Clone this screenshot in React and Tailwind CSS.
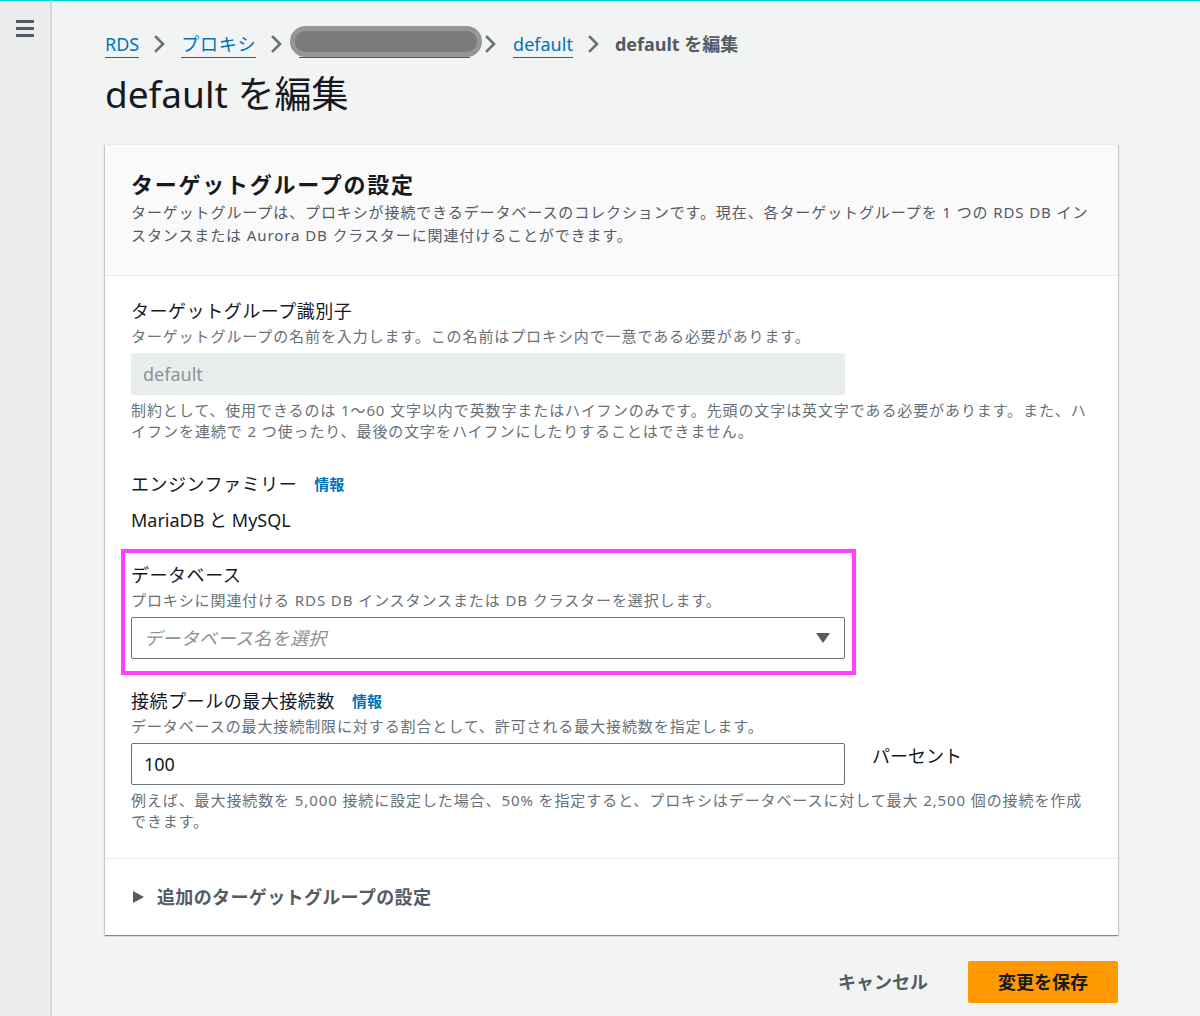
import React from 'react'

const font = { fontFamily: '"Noto Sans", "Noto Sans CJK JP", sans-serif' }

const Chevron = ({ className = 'mx-[15px]' }) => (
  <svg className={`${className} h-[20px] w-[12px] shrink-0`} viewBox="0 0 12 20" fill="none">
    <path d="M2 3l7 7-7 7" stroke="#687078" strokeWidth="2.6" strokeLinecap="square" />
  </svg>
)

const Field = ({ label, info, desc, children }) => (
  <div>
    <div className="flex items-center text-[18px] leading-[24px] tracking-[0.03em] text-[#16191f]">
      <span>{label}</span>
      {info && <span className="ml-[17px] text-[15px] font-bold tracking-normal text-[#0073bb]">情報</span>}
    </div>
    {desc && <p className="mt-[2px] text-[15px] leading-[22px] tracking-[0.06em] text-[#687078]">{desc}</p>}
    {children}
  </div>
)

export default function App() {
  return (
    <div className="flex min-h-[1016px] bg-[#f2f3f3]" style={font}>
      {/* sidebar */}
      <div className="w-[52px] shrink-0 border-t border-t-[#00d1d1] border-r-2 border-r-[#d8dada] bg-[#ebecec]">
        <div className="mt-[19px] ml-[16px] flex w-[18px] flex-col gap-[4px]">
          <div className="h-[3px] bg-[#545b64]" />
          <div className="h-[3px] bg-[#545b64]" />
          <div className="h-[3px] bg-[#545b64]" />
        </div>
      </div>

      <div className="flex-1 border-t border-t-[#00d1d1]">
        <div className="ml-[53px] w-[1013px]">
          {/* breadcrumb */}
          <div className="mt-[30px] flex h-[26px] items-center text-[18px] leading-[26px]">
            <a className="border-b border-[#0073bb] text-[#0073bb]">RDS</a>
            <Chevron />
            <a className="border-b border-[#0073bb] tracking-[0.04em] text-[#0073bb]">プロキシ</a>
            <Chevron />
            <span className="relative ml-[-8px] mr-[3px] h-[26px] w-[192px]">
              <span className="absolute left-[9px] right-[12px] bottom-[-1px] h-px bg-[#0073bb]" />
              <span className="absolute left-0 top-[-5px] h-[31px] w-[192px] rounded-full border-[5px] border-[#969696] bg-[#7b7b7b]" />
            </span>
            <Chevron className="mr-[16px]" />
            <a className="border-b border-[#0073bb] text-[#0073bb]">default</a>
            <Chevron />
            <span className="font-bold text-[#545b64]">default を編集</span>
          </div>

          {/* title */}
          <h1 className="mt-[14px] text-[37px] leading-[46px] text-[#16191f]">default を編集</h1>

          {/* card */}
          <div className="mt-[27px] border-t border-[#eaeded] bg-white shadow-[0_1px_1px_0_rgba(0,28,36,0.3),1px_1px_1px_0_rgba(0,28,36,0.15),-1px_1px_1px_0_rgba(0,28,36,0.15)]">
            <div className="border-b border-[#eaeded] bg-[#fafafa] px-[26px] pt-[25px] pb-[28px]">
              <h2 className="text-[22px] font-bold leading-[28px] tracking-[0.08em] text-[#16191f]">ターゲットグループの設定</h2>
              <p className="mt-[3px] text-[15px] leading-[23px] tracking-[0.06em] text-[#545b64]">
                ターゲットグループは、プロキシが接続できるデータベースのコレクションです。現在、各ターゲットグループを 1 つの RDS DB インスタンスまたは Aurora DB クラスターに関連付けることができます。
              </p>
            </div>

            <div className="flex flex-col gap-[30px] px-[26px] pt-[23px] pb-[26px]">
              <Field label="ターゲットグループ識別子" desc="ターゲットグループの名前を入力します。この名前はプロキシ内で一意である必要があります。">
                <div className="mt-[6px] flex h-[42px] w-[714px] items-center rounded-[2px] bg-[#eaeded] px-[12px] text-[18px] text-[#879596]">
                  default
                </div>
                <p className="mt-[5px] text-[15px] leading-[21px] tracking-[0.06em] text-[#687078]">
                  制約として、使用できるのは 1〜60 文字以内で英数字またはハイフンのみです。先頭の文字は英文字である必要があります。また、ハイフンを連続で 2 つ使ったり、最後の文字をハイフンにしたりすることはできません。
                </p>
              </Field>

              <div>
                <Field label="エンジンファミリー" info />
                <p className="mt-[12px] text-[18px] leading-[24px] text-[#16191f]">MariaDB と MySQL</p>
              </div>

              <div className="relative mt-[1px]">
                <div className="pointer-events-none absolute left-[-10px] top-[-14px] h-[126px] w-[735px] border-[4px] border-[#ff40ff]" />
                <Field label="データベース" desc="プロキシに関連付ける RDS DB インスタンスまたは DB クラスターを選択します。">
                  <div className="mt-[6px] flex h-[42px] w-[714px] items-center justify-between rounded-[2px] border border-[#687078] bg-white pl-[12px] pr-[14px]">
                    <span className="text-[18px] italic tracking-[0.02em] text-[#879596]">データベース名を選択</span>
                    <svg className="h-[10px] w-[14px]" viewBox="0 0 14 10">
                      <path d="M0 0h14L7 10z" fill="#545b64" />
                    </svg>
                  </div>
                </Field>
              </div>

              <Field label="接続プールの最大接続数" info desc="データベースの最大接続制限に対する割合として、許可される最大接続数を指定します。">
                <div className="mt-[6px] flex items-start">
                  <div className="flex h-[42px] w-[714px] items-center rounded-[2px] border border-[#687078] bg-white px-[12px] text-[18px] text-[#16191f]">
                    100
                  </div>
                  <span className="ml-[27px] mt-[1px] text-[18px] leading-[24px] text-[#16191f]">パーセント</span>
                </div>
                <p className="mt-[5px] pr-[4px] text-[15px] leading-[21px] tracking-[0.06em] text-[#687078]">
                  例えば、最大接続数を 5,000 接続に設定した場合、50% を指定すると、プロキシはデータベースに対して最大 2,500 個の接続を作成できます。
                </p>
              </Field>
            </div>

            <div className="flex h-[77px] items-center border-t border-[#eaeded] px-[28px]">
              <svg className="h-[12px] w-[11px]" viewBox="0 0 11 12">
                <path d="M0 0l11 6-11 6z" fill="#545b64" />
              </svg>
              <span className="ml-[13px] text-[18px] font-bold tracking-[0.02em] text-[#545b64]">追加のターゲットグループの設定</span>
            </div>
          </div>

          {/* actions */}
          <div className="mt-[26px] flex items-center justify-end">
            <button className="mr-[40px] text-[18px] font-bold text-[#545b64]">キャンセル</button>
            <button className="h-[42px] w-[150px] rounded-[2px] bg-[#ff9900] text-[18px] font-bold text-[#16191f]">変更を保存</button>
          </div>
        </div>
      </div>
    </div>
  )
}
